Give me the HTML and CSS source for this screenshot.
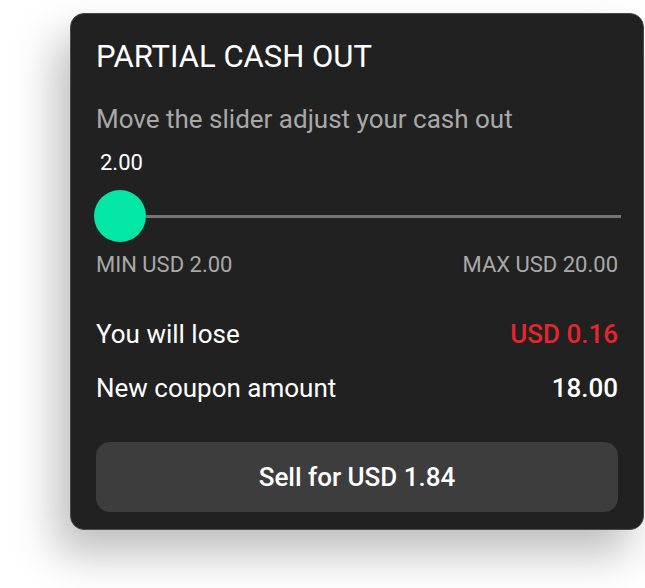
FILE: index.html
```html
<!DOCTYPE html>
<html lang="en">
<head>
<meta charset="utf-8">
<title>Partial Cash Out</title>
<link rel="stylesheet" href="styles.css">
</head>
<body>
<div class="page">
  <section class="card">
    <h1 class="title">PARTIAL CASH OUT</h1>
    <p class="subtitle">Move the slider adjust your cash out</p>
    <div class="value">2.00</div>
    <div class="slider">
      <div class="thumb"></div>
      <div class="track"></div>
    </div>
    <div class="range">
      <span>MIN USD 2.00</span>
      <span>MAX USD 20.00</span>
    </div>
    <div class="row first">
      <span>You will lose</span>
      <span class="amount loss">USD 0.16</span>
    </div>
    <div class="row">
      <span>New coupon amount</span>
      <span class="amount">18.00</span>
    </div>
    <button class="sell">Sell for USD 1.84</button>
  </section>
</div>
</body>
</html>
```

FILE: styles.css
```css
html, body {
  margin: 0;
  padding: 0;
  background: #ffffff;
}
body {
  font-family: Roboto, "Noto Sans", sans-serif;
  width: 645px;
  height: 588px;
  overflow: hidden;
}
.page {
  padding: 13px 1px 0 70px;
}
.card {
  box-sizing: border-box;
  width: 574px;
  height: 517px;
  background: #212121;
  border: 1px solid #4a4a4a;
  border-radius: 14px;
  box-shadow: -14px 24px 44px rgba(0, 0, 0, 0.26);
  padding: 25px 25px 0 25px;
  color: #ffffff;
  display: flex;
  flex-direction: column;
}
.title {
  margin: 0;
  font-size: 31px;
  font-weight: 400;
  line-height: 36px;
}
.subtitle {
  margin: 29px 0 0;
  font-size: 26px;
  line-height: 30px;
  color: #a9a9a9;
}
.value {
  margin: 16px 0 0 4px;
  font-size: 22px;
  line-height: 26px;
  font-weight: 400;
}
.slider {
  margin: 14px -3px 0 -2px;
  height: 52px;
  display: flex;
  align-items: center;
}
.thumb {
  width: 52px;
  height: 52px;
  border-radius: 50%;
  background: #04e6a6;
  flex: none;
}
.track {
  flex: 1;
  height: 3px;
  background: #757575;
}
.range {
  margin-top: 11px;
  display: flex;
  justify-content: space-between;
  font-size: 22px;
  line-height: 24px;
  color: #a9a9a9;
}
.row {
  display: flex;
  justify-content: space-between;
  font-size: 26px;
  line-height: 30px;
  margin-top: 24px;
}
.row.first {
  margin-top: 42px;
}
.amount {
  font-weight: 500;
}
.loss {
  color: #e5262e;
}
.sell {
  margin-top: 39px;
  height: 70px;
  border: 0;
  border-radius: 14px;
  background: #3d3d3d;
  color: #ffffff;
  font-family: inherit;
  font-size: 26px;
  font-weight: 500;
}
```
